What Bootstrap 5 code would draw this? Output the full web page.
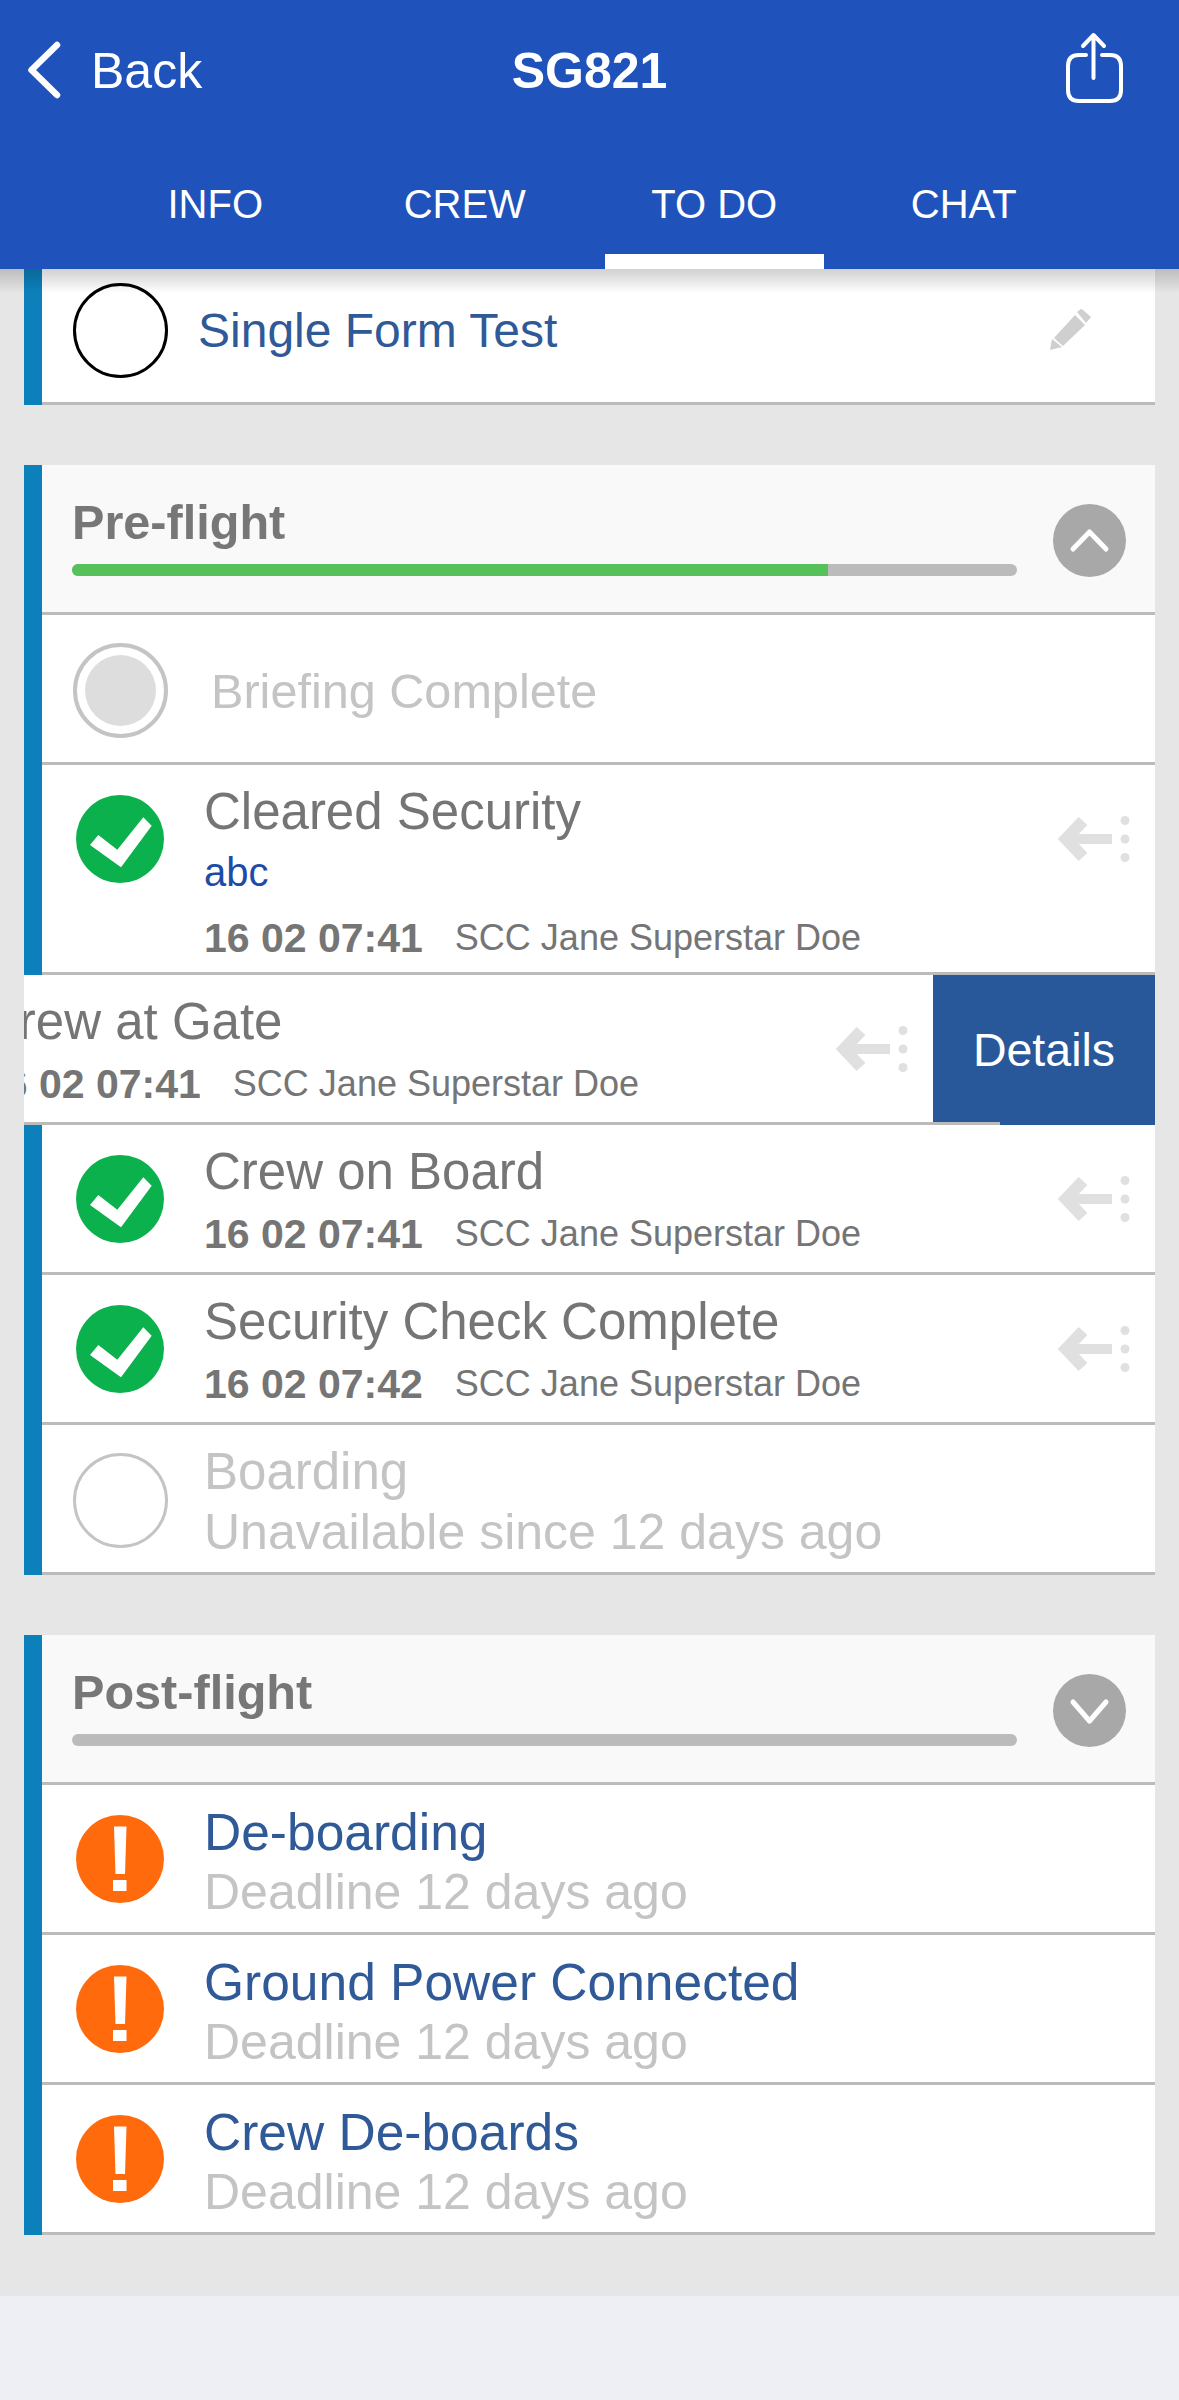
<!DOCTYPE html>
<html lang="en">
<head>
    <meta charset="UTF-8">
    <meta name="viewport" content="width=device-width, initial-scale=1.0">
    <title>SG821 To Do</title>
    <link href="https://cdn.jsdelivr.net/npm/bootstrap@5.3.0/dist/css/bootstrap.min.css" rel="stylesheet">
    <style>
        body {
            font-family: "Liberation Sans", Arial, sans-serif;
            background-color: #eeeff4;
            margin: 0;
        }

        /* Header */
        .flight-header {
            position: relative;
            z-index: 2;
            height: 269px;
            background-color: #1f52bb;
            color: #fff;
        }

        .flight-header::after {
            content: "";
            position: absolute;
            top: 100%;
            left: 0;
            right: 0;
            height: 24px;
            background: linear-gradient(rgba(0, 0, 0, .18), rgba(0, 0, 0, .1) 45%, rgba(0, 0, 0, 0));
        }

        .top-bar {
            height: 140px;
            font-size: 50px;
        }

        .top-label {
            padding-top: 2px;
        }

        .top-side {
            flex: 1 1 0;
        }

        .back-link {
            gap: 27px;
            padding-left: 28px;
            color: #fff;
            text-decoration: none;
        }

        .share-icon {
            margin-right: 55px;
        }

        .flight-tabs .nav-link {
            position: relative;
            width: 249.5px;
            height: 129px;
            padding: 0;
            line-height: 128px;
            font-size: 40px;
            text-align: center;
            color: #fff;
        }

        .flight-tabs .nav-link.active::after {
            content: "";
            position: absolute;
            left: 15px;
            right: 15px;
            bottom: 0;
            height: 15px;
            background-color: #fff;
        }

        /* List */
        .todo-scroll {
            height: 2027px;
            overflow: hidden;
            background-color: #e6e6e6;
        }

        .todo-card {
            margin: 0 24px 60px;
        }

        .todo-card.scrolled {
            margin-top: -14px;
        }

        .todo-row,
        .todo-head {
            border-left: 18px solid #0c80bb;
        }

        .todo-row {
            background-color: #fff;
        }

        .todo-body {
            display: flex;
            align-items: flex-start;
            height: 150px;
            border-bottom: 3px solid #bbb;
        }

        .todo-body.tall {
            height: 210px;
        }

        .icon-slot {
            flex: none;
            display: flex;
            align-items: center;
            justify-content: center;
            width: 156px;
            height: 147px;
            margin-right: 6px;
        }

        .ring {
            width: 95px;
            height: 95px;
            margin-top: 3px;
            border: 3px solid #000;
        }

        .ring.off {
            border-color: #c4c4c4;
        }

        .ring.pending {
            padding: 8px;
            border-color: #c4c4c4;
            border-width: 4px;
        }

        .ring.pending span {
            display: block;
            height: 100%;
            border-radius: 50%;
            background-color: #ddd;
        }

        .todo-text {
            flex: 1 1 auto;
            padding-top: 17px;
            min-width: 0;
        }

        .todo-title {
            font-size: 51px;
            line-height: 60px;
            color: #757575;
        }

        .todo-title.open {
            color: #2f5997;
            font-size: 51.5px;
        }

        .todo-title.off,
        .todo-sub {
            color: #c4c4c4;
        }

        .todo-sub {
            font-size: 50px;
            line-height: 60px;
        }

        .todo-note {
            font-size: 40px;
            line-height: 60px;
            color: #1d4ca8;
        }

        .todo-meta {
            display: flex;
            gap: 32px;
            font-size: 36px;
            line-height: 64px;
            color: #757575;
            white-space: nowrap;
        }

        .todo-meta.spaced {
            margin-top: 4px;
        }

        .todo-meta b {
            font-size: 41px;
        }

        .single-line {
            align-self: center;
            padding-top: 5px;
        }

        .form-title {
            margin-left: -6px;
            font-size: 48px;
            line-height: 60px;
            color: #2f5997;
        }

        .briefing-title {
            margin-left: 7px;
            font-size: 48.6px;
            line-height: 60px;
            color: #c4c4c4;
        }

        .row-tool {
            flex: none;
            display: flex;
            align-items: center;
            height: 147px;
            margin-right: 24px;
        }

        .edit-tool {
            margin-right: 63px;
            padding-top: 3px;
        }

        /* Swiped row */
        .swiped-row {
            position: relative;
            display: flex;
            overflow: hidden;
        }

        .swiped-row .todo-row {
            flex: none;
            width: 1131px;
            margin-left: -222px;
        }

        .swiped-row::after {
            content: "";
            position: absolute;
            left: 0;
            bottom: 0;
            width: 976px;
            height: 3px;
            background-color: #bbb;
        }

        .details-btn {
            flex: none;
            width: 222px;
            height: 150px;
            padding: 2px 0 0;
            border: 0;
            border-radius: 0;
            font-size: 46.5px;
            color: #fff;
            background-color: #28579a;
        }

        /* Section header */
        .todo-head {
            display: flex;
            align-items: flex-start;
            height: 150px;
            padding: 27px 0 0 30px;
            background-color: #f9f9f9;
            box-shadow: inset 0 -3px #bbb;
            box-sizing: border-box;
        }

        .head-main {
            flex: none;
            width: 945px;
        }

        .head-title {
            margin: 0;
            font-size: 48.6px;
            font-weight: 700;
            line-height: 60px;
            color: #777;
        }

        .head-progress {
            height: 12px;
            margin-top: 12px;
            border-radius: 6px;
            background-color: #bbb;
        }

        .head-progress .progress-bar {
            background-color: #56c15a;
        }

        .toggle-btn {
            flex: none;
            display: flex;
            width: 73px;
            height: 73px;
            margin: 12px 0 0 36px;
            padding: 0;
            border: 0;
            background-color: #a8a8a8;
        }
    </style>
</head>
<body>
    <svg width="0" height="0" class="position-absolute">
        <symbol id="ico-done" viewBox="0 0 88 88">
            <circle cx="44" cy="44" r="44" fill="#0bb14c"/>
            <path d="M14 50 L22.3 40 L41.3 54.7 L67.3 22.3 L75.7 30.7 L45 72.3 Z" fill="#fff"/>
        </symbol>
        <symbol id="ico-late" viewBox="0 0 88 88">
            <circle cx="44" cy="44" r="44" fill="#ff6a0c"/>
            <path d="M38 11.5 H50.5 L49 59 H39.5 Z" fill="#fff"/>
            <rect x="37" y="65" width="13.5" height="11" fill="#fff"/>
        </symbol>
        <symbol id="ico-swipe" viewBox="0 0 74 46">
            <path d="M26 5 L9 23 L26 41" fill="none" stroke="#e0e0e0" stroke-width="12"/>
            <path d="M12 23 H55" fill="none" stroke="#e0e0e0" stroke-width="10"/>
            <circle cx="68" cy="4.5" r="4.5" fill="#e0e0e0"/>
            <circle cx="68" cy="23" r="4.5" fill="#e0e0e0"/>
            <circle cx="68" cy="41.5" r="4.5" fill="#e0e0e0"/>
        </symbol>
    </svg>

    <!-- Header -->
    <header class="flight-header">
        <div class="top-bar d-flex align-items-center">
            <div class="top-side d-flex">
                <a href="#" class="back-link d-flex align-items-center">
                    <svg width="36" height="58" viewBox="0 0 36 58"><path d="M29 4 L3.5 29 L29 54" fill="none" stroke="#fff" stroke-width="6.5" stroke-linecap="round" stroke-linejoin="round"/></svg>
                    <span class="top-label">Back</span>
                </a>
            </div>
            <div class="top-label fw-bold">SG821</div>
            <div class="top-side d-flex justify-content-end">
                <svg class="share-icon" width="60" height="78" viewBox="0 0 60 78" fill="none" stroke="#fff" stroke-width="4" stroke-linecap="round" stroke-linejoin="round">
                    <path d="M22 24 H15 Q4 24 4 35 V59 Q4 70 15 70 H46 Q57 70 57 59 V35 Q57 24 46 24 H38"/>
                    <path d="M29.5 47 V4 M19 15 L29.5 4 L40 15"/>
                </svg>
            </div>
        </div>
        <ul class="nav flight-tabs justify-content-center flex-nowrap">
            <li class="nav-item"><a class="nav-link" href="#">INFO</a></li>
            <li class="nav-item"><a class="nav-link" href="#">CREW</a></li>
            <li class="nav-item"><a class="nav-link active" href="#">TO DO</a></li>
            <li class="nav-item"><a class="nav-link" href="#">CHAT</a></li>
        </ul>
    </header>

    <main class="todo-scroll">
        <!-- Forms -->
        <section class="todo-card scrolled">
            <div class="todo-row">
                <div class="todo-body">
                    <div class="icon-slot"><div class="ring rounded-circle"></div></div>
                    <div class="todo-text single-line"><div class="form-title">Single Form Test</div></div>
                    <div class="row-tool edit-tool">
                        <svg width="42" height="42" viewBox="0 0 42 42" fill="#cfcfcf">
                            <path d="M4 29 L25 6 L35 16 L13 37 Z"/>
                            <path d="M0 41 L2 30 L12 38 Z"/>
                            <path d="M27 3 L31 0 Q32 0 33 1 L41 8 L36 14 Z"/>
                        </svg>
                    </div>
                </div>
            </div>
        </section>

        <!-- Pre-flight -->
        <section class="todo-card">
            <div class="todo-head">
                <div class="head-main">
                    <h2 class="head-title">Pre-flight</h2>
                    <div class="progress head-progress"><div class="progress-bar" style="width: 80%"></div></div>
                </div>
                <button class="btn toggle-btn rounded-circle" type="button" aria-label="Collapse">
                    <svg width="73" height="73" viewBox="0 0 73 73"><path d="M20 45 L36.5 28 L53 45" fill="none" stroke="#fff" stroke-width="5" stroke-linecap="round" stroke-linejoin="round"/></svg>
                </button>
            </div>
            <div class="todo-row">
                <div class="todo-body">
                    <div class="icon-slot"><div class="ring pending rounded-circle"><span></span></div></div>
                    <div class="todo-text single-line"><div class="briefing-title">Briefing Complete</div></div>
                </div>
            </div>
            <div class="todo-row">
                <div class="todo-body tall">
                    <div class="icon-slot"><svg width="88" height="88"><use href="#ico-done"/></svg></div>
                    <div class="todo-text">
                        <div class="todo-title">Cleared Security</div>
                        <div class="todo-note">abc</div>
                        <div class="todo-meta spaced"><b>16 02 07:41</b><span>SCC Jane Superstar Doe</span></div>
                    </div>
                    <div class="row-tool"><svg width="74" height="46"><use href="#ico-swipe"/></svg></div>
                </div>
            </div>
            <div class="swiped-row">
                <div class="todo-row">
                    <div class="todo-body">
                        <div class="icon-slot"><svg width="88" height="88"><use href="#ico-done"/></svg></div>
                        <div class="todo-text">
                            <div class="todo-title">Crew at Gate</div>
                            <div class="todo-meta"><b>16 02 07:41</b><span>SCC Jane Superstar Doe</span></div>
                        </div>
                        <div class="row-tool"><svg width="74" height="46"><use href="#ico-swipe"/></svg></div>
                    </div>
                </div>
                <button class="btn details-btn" type="button">Details</button>
            </div>
            <div class="todo-row">
                <div class="todo-body">
                    <div class="icon-slot"><svg width="88" height="88"><use href="#ico-done"/></svg></div>
                    <div class="todo-text">
                        <div class="todo-title">Crew on Board</div>
                        <div class="todo-meta"><b>16 02 07:41</b><span>SCC Jane Superstar Doe</span></div>
                    </div>
                    <div class="row-tool"><svg width="74" height="46"><use href="#ico-swipe"/></svg></div>
                </div>
            </div>
            <div class="todo-row">
                <div class="todo-body">
                    <div class="icon-slot"><svg width="88" height="88"><use href="#ico-done"/></svg></div>
                    <div class="todo-text">
                        <div class="todo-title">Security Check Complete</div>
                        <div class="todo-meta"><b>16 02 07:42</b><span>SCC Jane Superstar Doe</span></div>
                    </div>
                    <div class="row-tool"><svg width="74" height="46"><use href="#ico-swipe"/></svg></div>
                </div>
            </div>
            <div class="todo-row">
                <div class="todo-body">
                    <div class="icon-slot"><div class="ring off rounded-circle"></div></div>
                    <div class="todo-text">
                        <div class="todo-title off">Boarding</div>
                        <div class="todo-sub">Unavailable since 12 days ago</div>
                    </div>
                </div>
            </div>
        </section>

        <!-- Post-flight -->
        <section class="todo-card">
            <div class="todo-head">
                <div class="head-main">
                    <h2 class="head-title">Post-flight</h2>
                    <div class="progress head-progress"><div class="progress-bar" style="width: 0%"></div></div>
                </div>
                <button class="btn toggle-btn rounded-circle" type="button" aria-label="Expand">
                    <svg width="73" height="73" viewBox="0 0 73 73"><path d="M20 28 L36.5 47 L53 28" fill="none" stroke="#fff" stroke-width="5" stroke-linecap="round" stroke-linejoin="round"/></svg>
                </button>
            </div>
            <div class="todo-row">
                <div class="todo-body">
                    <div class="icon-slot"><svg width="88" height="88"><use href="#ico-late"/></svg></div>
                    <div class="todo-text">
                        <div class="todo-title open">De-boarding</div>
                        <div class="todo-sub">Deadline 12 days ago</div>
                    </div>
                </div>
            </div>
            <div class="todo-row">
                <div class="todo-body">
                    <div class="icon-slot"><svg width="88" height="88"><use href="#ico-late"/></svg></div>
                    <div class="todo-text">
                        <div class="todo-title open">Ground Power Connected</div>
                        <div class="todo-sub">Deadline 12 days ago</div>
                    </div>
                </div>
            </div>
            <div class="todo-row">
                <div class="todo-body">
                    <div class="icon-slot"><svg width="88" height="88"><use href="#ico-late"/></svg></div>
                    <div class="todo-text">
                        <div class="todo-title open">Crew De-boards</div>
                        <div class="todo-sub">Deadline 12 days ago</div>
                    </div>
                </div>
            </div>
        </section>
    </main>

    <script src="https://cdn.jsdelivr.net/npm/bootstrap@5.3.0/dist/js/bootstrap.bundle.min.js"></script>
</body>
</html>
